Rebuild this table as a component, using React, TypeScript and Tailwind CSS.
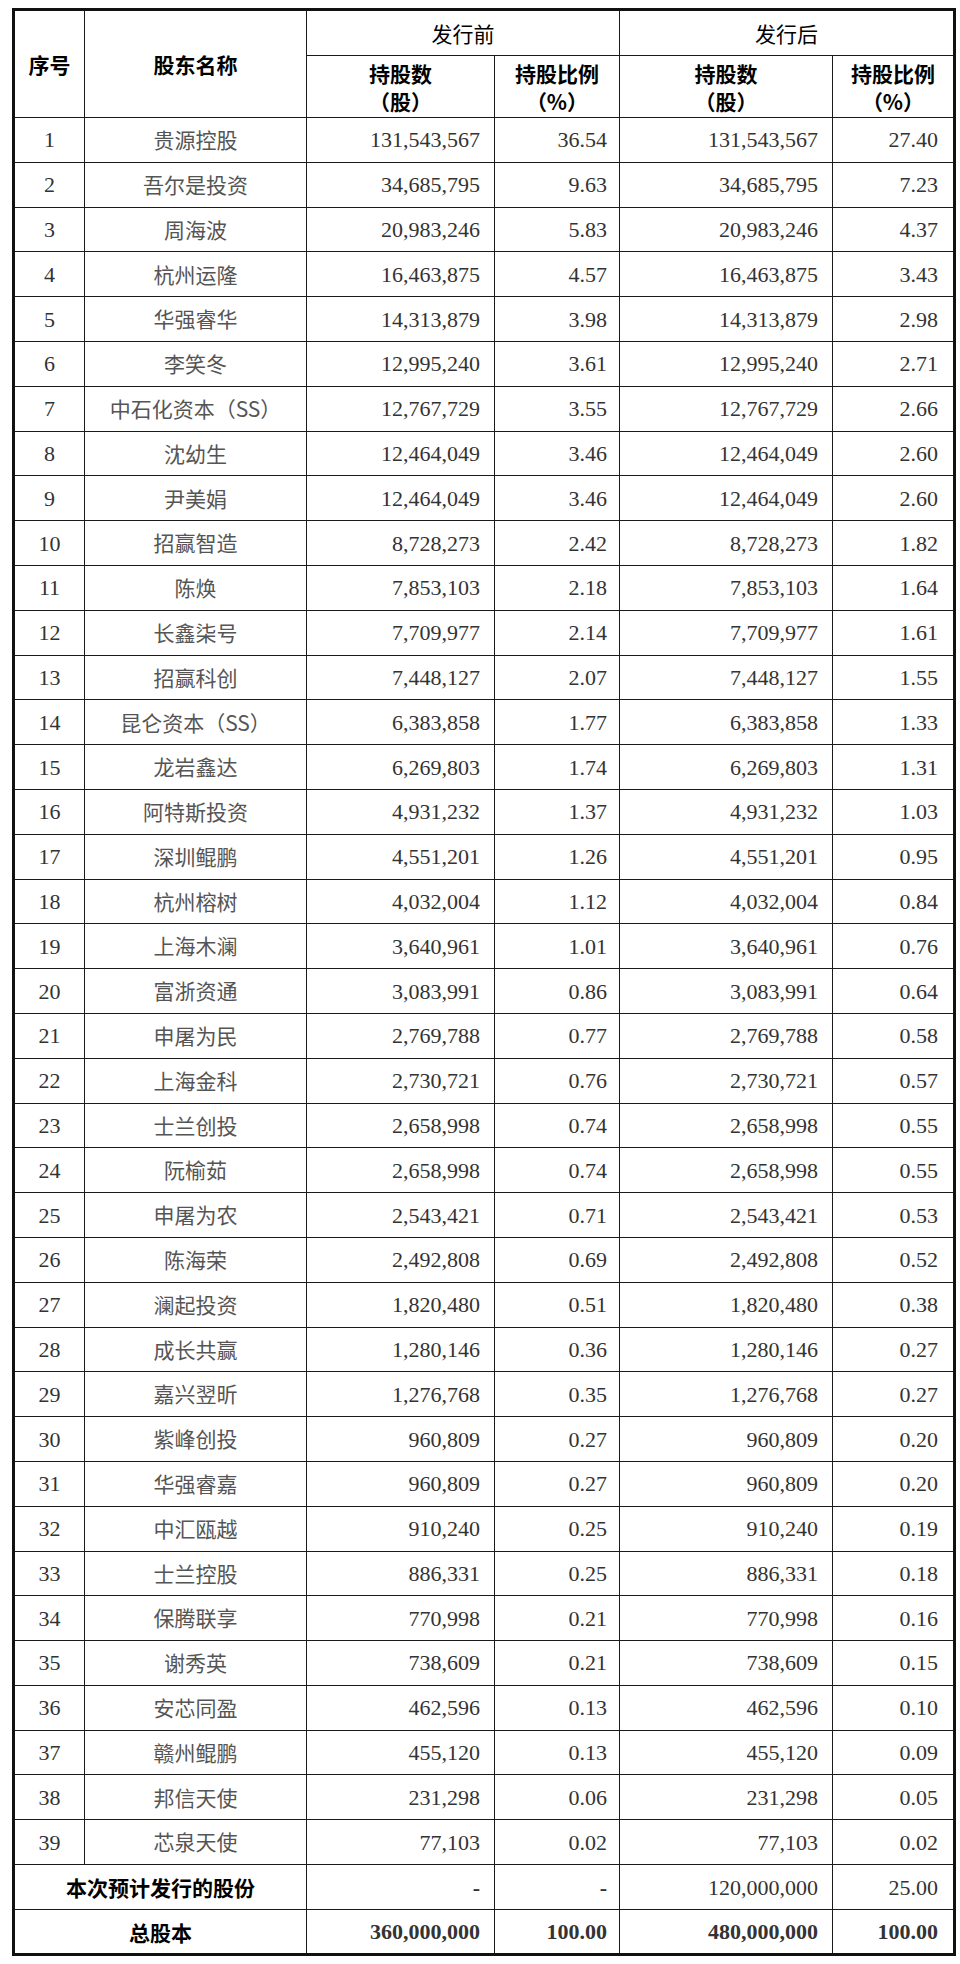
import React from 'react';

// [名称, 发行前持股数, 发行前比例, 发行后持股数, 发行后比例]
const rows: [string, string, string, string, string][] = [
  ['贵源控股', '131,543,567', '36.54', '131,543,567', '27.40'],
  ['吾尔是投资', '34,685,795', '9.63', '34,685,795', '7.23'],
  ['周海波', '20,983,246', '5.83', '20,983,246', '4.37'],
  ['杭州运隆', '16,463,875', '4.57', '16,463,875', '3.43'],
  ['华强睿华', '14,313,879', '3.98', '14,313,879', '2.98'],
  ['李笑冬', '12,995,240', '3.61', '12,995,240', '2.71'],
  ['中石化资本（SS）', '12,767,729', '3.55', '12,767,729', '2.66'],
  ['沈幼生', '12,464,049', '3.46', '12,464,049', '2.60'],
  ['尹美娟', '12,464,049', '3.46', '12,464,049', '2.60'],
  ['招赢智造', '8,728,273', '2.42', '8,728,273', '1.82'],
  ['陈焕', '7,853,103', '2.18', '7,853,103', '1.64'],
  ['长鑫柒号', '7,709,977', '2.14', '7,709,977', '1.61'],
  ['招赢科创', '7,448,127', '2.07', '7,448,127', '1.55'],
  ['昆仑资本（SS）', '6,383,858', '1.77', '6,383,858', '1.33'],
  ['龙岩鑫达', '6,269,803', '1.74', '6,269,803', '1.31'],
  ['阿特斯投资', '4,931,232', '1.37', '4,931,232', '1.03'],
  ['深圳鲲鹏', '4,551,201', '1.26', '4,551,201', '0.95'],
  ['杭州榕树', '4,032,004', '1.12', '4,032,004', '0.84'],
  ['上海木澜', '3,640,961', '1.01', '3,640,961', '0.76'],
  ['富浙资通', '3,083,991', '0.86', '3,083,991', '0.64'],
  ['申屠为民', '2,769,788', '0.77', '2,769,788', '0.58'],
  ['上海金科', '2,730,721', '0.76', '2,730,721', '0.57'],
  ['士兰创投', '2,658,998', '0.74', '2,658,998', '0.55'],
  ['阮榆茹', '2,658,998', '0.74', '2,658,998', '0.55'],
  ['申屠为农', '2,543,421', '0.71', '2,543,421', '0.53'],
  ['陈海荣', '2,492,808', '0.69', '2,492,808', '0.52'],
  ['澜起投资', '1,820,480', '0.51', '1,820,480', '0.38'],
  ['成长共赢', '1,280,146', '0.36', '1,280,146', '0.27'],
  ['嘉兴翌昕', '1,276,768', '0.35', '1,276,768', '0.27'],
  ['紫峰创投', '960,809', '0.27', '960,809', '0.20'],
  ['华强睿嘉', '960,809', '0.27', '960,809', '0.20'],
  ['中汇瓯越', '910,240', '0.25', '910,240', '0.19'],
  ['士兰控股', '886,331', '0.25', '886,331', '0.18'],
  ['保腾联享', '770,998', '0.21', '770,998', '0.16'],
  ['谢秀英', '738,609', '0.21', '738,609', '0.15'],
  ['安芯同盈', '462,596', '0.13', '462,596', '0.10'],
  ['赣州鲲鹏', '455,120', '0.13', '455,120', '0.09'],
  ['邦信天使', '231,298', '0.06', '231,298', '0.05'],
  ['芯泉天使', '77,103', '0.02', '77,103', '0.02'],
];

const serif = "font-['Liberation_Serif','Noto_Sans_CJK_SC',serif]";
const hei = "font-['Noto_Sans_CJK_SC','Liberation_Sans',sans-serif]";
const cell = 'border border-[#1a1a1a] p-0';
const th = `${cell} ${hei} font-bold text-black text-[21px] leading-[28px] text-center align-middle`;
const num = `${cell} ${serif} text-[22px] text-[#333] text-right align-middle`;

export default function App() {
  return (
    <div className="bg-white w-[960px] h-[1964px] pt-2 pl-3">
      <table className="table-fixed border-collapse w-[941px] border-[3px] border-[#111]">
        <colgroup>
          <col className="w-[71px]" />
          <col className="w-[222px]" />
          <col className="w-[188px]" />
          <col className="w-[125px]" />
          <col className="w-[213px]" />
          <col className="w-[122px]" />
        </colgroup>
        <thead>
          <tr className="h-[46px]">
            <th rowSpan={2} className={th}>序号</th>
            <th rowSpan={2} className={th}>股东名称</th>
            <th colSpan={2} className={`${th} font-normal`}>发行前</th>
            <th colSpan={2} className={`${th} font-normal`}>发行后</th>
          </tr>
          <tr className="h-[62px]">
            <th className={th}>持股数<br />（股）</th>
            <th className={th}>持股比例<br />（%）</th>
            <th className={th}>持股数<br />（股）</th>
            <th className={th}>持股比例<br />（%）</th>
          </tr>
        </thead>
        <tbody>
          {rows.map((r, i) => (
            <tr key={i} className="h-[44.8px]">
              <td className={`${cell} ${serif} text-[22px] text-[#333] text-center`}>{i + 1}</td>
              <td className={`${cell} ${hei} text-[21px] text-[#555] text-center`}>{r[0]}</td>
              <td className={`${num} pr-[14px]`}>{r[1]}</td>
              <td className={`${num} pr-[12px]`}>{r[2]}</td>
              <td className={`${num} pr-[14px]`}>{r[3]}</td>
              <td className={`${num} pr-[15px]`}>{r[4]}</td>
            </tr>
          ))}
          <tr className="h-[45px]">
            <td colSpan={2} className={`${th} text-[#222]`}>本次预计发行的股份</td>
            <td className={`${num} pr-[14px] font-bold text-[#222]`}>-</td>
            <td className={`${num} pr-[12px] font-bold text-[#222]`}>-</td>
            <td className={`${num} pr-[14px]`}>120,000,000</td>
            <td className={`${num} pr-[15px]`}>25.00</td>
          </tr>
          <tr className="h-[45px]">
            <td colSpan={2} className={`${th} text-[#222]`}>总股本</td>
            <td className={`${num} pr-[14px] font-bold text-[#111]`}>360,000,000</td>
            <td className={`${num} pr-[12px] font-bold text-[#111]`}>100.00</td>
            <td className={`${num} pr-[14px] font-bold text-[#111]`}>480,000,000</td>
            <td className={`${num} pr-[15px] font-bold text-[#111]`}>100.00</td>
          </tr>
        </tbody>
      </table>
    </div>
  );
}
